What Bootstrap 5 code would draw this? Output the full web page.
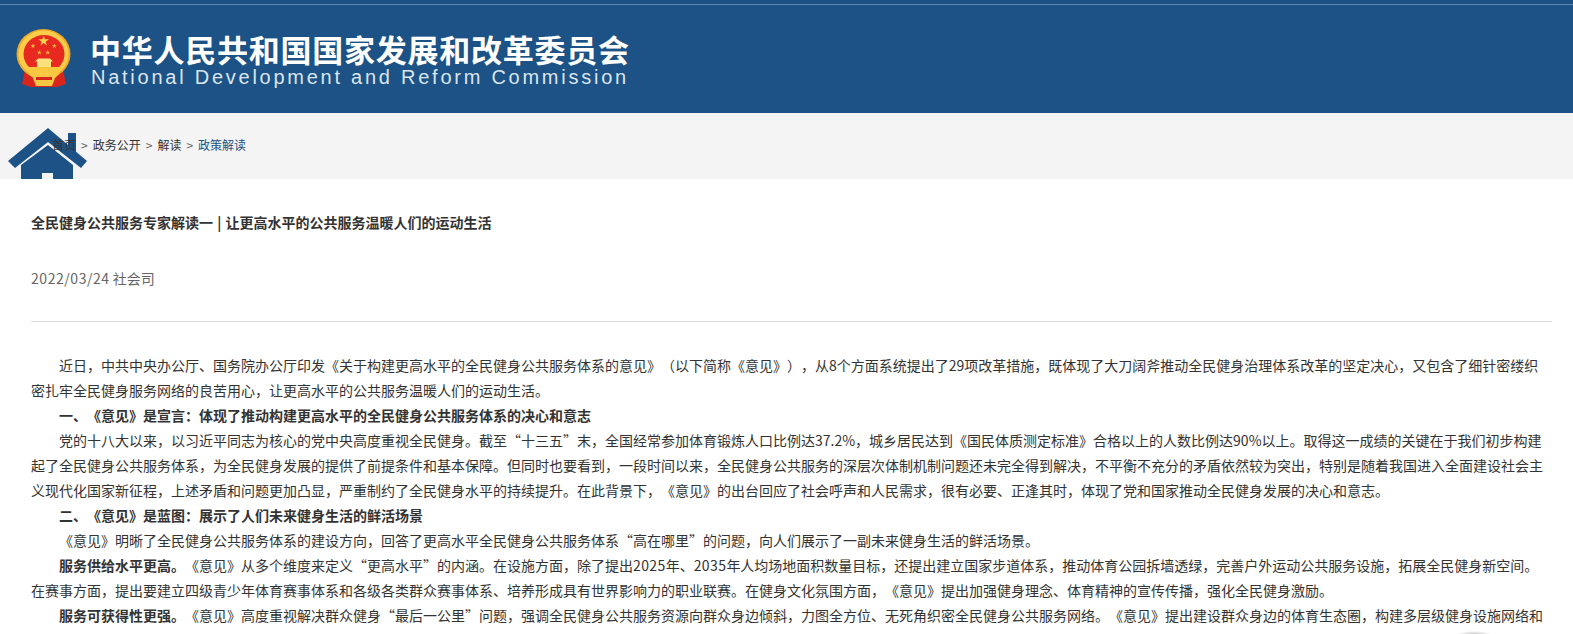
<!DOCTYPE html>
<html lang="zh-CN">
<head>
  <meta charset="UTF-8" />
  <meta name="viewport" content="width=device-width, initial-scale=1" />
  <title>全民健身公共服务专家解读一</title>
  <link href="https://cdn.jsdelivr.net/npm/bootstrap@5.3.2/dist/css/bootstrap.min.css" rel="stylesheet">
  <style>
    body {
      font-family: "Noto Sans CJK SC", "Noto Sans", sans-serif;
      color: #333;
      background: #fff;
      font-size: 14px;
      text-spacing-trim: space-all;
      font-kerning: none;
      overflow: hidden;
    }
    .site-head {
      height: 113px;
      background: #1c5285;
      border-top: 4px solid #1c5285;
      position: relative;
      padding: 24px 0 0 16px;
      gap: 18px;
    }
    .site-head::before {
      content: "";
      position: absolute;
      left: 0;
      right: 0;
      top: 0;
      height: 1px;
      background: #5f86ab;
    }
    .emblem { width: 56px; height: 60px; flex: none; filter: blur(.3px); }
    .name-cn {
      font-size: 31px;
      font-weight: 700;
      line-height: 34px;
      letter-spacing: .75px;
      color: #fff;
      white-space: nowrap;
    }
    .name-en {
      font-family: "Liberation Sans", sans-serif;
      font-size: 20px;
      line-height: 22px;
      letter-spacing: 2.75px;
      padding-left: 1px;
      color: #dbe5ee;
      white-space: nowrap;
    }
    .crumb-band {
      height: 66px;
      background: #f4f4f4;
      position: relative;
      overflow: hidden;
      padding: 23px 0 0 52px;
    }
    .home-pic { position: absolute; left: 8px; top: 15px; width: 80px; height: 51px; filter: blur(.6px); }
    .crumb-band .breadcrumb {
      --bs-breadcrumb-divider: ">";
      --bs-breadcrumb-margin-bottom: 0;
      --bs-breadcrumb-item-padding-x: 5px;
      --bs-breadcrumb-divider-color: #666;
      position: relative;
      font-size: 12px;
      line-height: 18px;
    }
    .crumb-band a { color: #333; text-decoration: none; }
    .crumb-band .active a { color: #1c5285; }
    .article-wrap { padding: 32px 21px 0 31px; }
    .article-title { font-size: 14px; font-weight: 700; line-height: 22px; margin: 0 0 34px; color: #333; word-spacing: 1px; }
    .article-meta { font-size: 14px; line-height: 22px; color: #666; margin: 0; }
    .meta-date { letter-spacing: .55px; }
    .article-rule { margin: 32px 0 31px; border: 0; border-top: 1px solid #ddd; opacity: 1; }
    .article-body { padding-right: 5px; }
    .article-body p { margin: 0; font-size: 14px; line-height: 25px; text-indent: 2em; color: #333; }
    .num-wide { letter-spacing: .4px; }
    .float-shade {
      position: fixed;
      left: 1456px;
      bottom: -5px;
      width: 36px;
      height: 8px;
      border-radius: 50%;
      background: radial-gradient(closest-side, #bbb, rgba(187,187,187,0));
    }
  </style>
</head>
<body>

  <header class="site-head d-flex align-items-start">
    <svg class="emblem" viewBox="0 0 56 60" aria-hidden="true">
      <defs>
        <polygon id="star5" points="0,-1 .225,-.309 .951,-.309 .363,.118 .588,.809 0,.382 -.588,.809 -.363,.118 -.951,-.309 -.225,-.309"/>
      </defs>
      <path d="M9 42 L6 56 L15 59 L41 59 L50 56 L47 42 Z" fill="#d9261c"/>
      <ellipse cx="27.5" cy="26" rx="27" ry="25" fill="#eeaa2a"/>
      <ellipse cx="27.5" cy="26" rx="25" ry="23.5" fill="#fbcd4a"/>
      <ellipse cx="28" cy="26" rx="20.5" ry="19" fill="#e8291f"/>
      <use href="#star5" fill="#fbd84e" transform="translate(27.7 13) scale(5.5)"/>
      <use href="#star5" fill="#f3bd3c" transform="translate(17 18) scale(2.6)"/>
      <use href="#star5" fill="#f3bd3c" transform="translate(38.3 18) scale(2.6)"/>
      <use href="#star5" fill="#f3bd3c" transform="translate(23.3 24.5) scale(2.6)"/>
      <use href="#star5" fill="#f3bd3c" transform="translate(31.7 24.5) scale(2.6)"/>
      <path d="M22 30.5 H34 L37 33.5 H35 V39 H21 V33.5 H19 Z" fill="#fbe07c"/>
      <path d="M10 39 H46 L43 45 H13 Z" fill="#f9c83f"/>
      <path d="M13 46 Q20 41 25 47 L28 45 L31 47 Q36 41 43 46 L39 50 L36 58 H20 L17 50 Z" fill="#f7c743"/>
      <path d="M20 49 H36 V52 H20 Z" fill="#d9261c"/>
    </svg>
    <div class="pt-1">
      <div class="name-cn">中华人民共和国国家发展和改革委员会</div>
      <div class="name-en">National Development and Reform Commission</div>
    </div>
  </header>

  <div class="crumb-band">
    <svg class="home-pic" viewBox="0 0 80 51" aria-hidden="true">
      <path d="M60 5 H68 V26 H60 Z" fill="#1c5285"/>
      <path d="M40 0 L79 33 L73 40 L40 14 L7 40 L0 33 Z" fill="#1c5285"/>
      <path d="M40 17 L65 37 V51 H45 V45 H34 V51 H13 V37 Z" fill="#1c5285"/>
    </svg>
    <nav aria-label="breadcrumb">
      <ol class="breadcrumb">
        <li class="breadcrumb-item"><a href="#">首页</a></li>
        <li class="breadcrumb-item"><a href="#">政务公开</a></li>
        <li class="breadcrumb-item"><a href="#">解读</a></li>
        <li class="breadcrumb-item active" aria-current="page"><a href="#">政策解读</a></li>
      </ol>
    </nav>
  </div>

  <main class="article-wrap">
    <h1 class="article-title">全民健身公共服务专家解读一 | 让更高水平的公共服务温暖人们的运动生活</h1>
    <p class="article-meta"><span class="meta-date">2022/03/24</span> 社会司</p>
    <hr class="article-rule">
    <div class="article-body">
      <p>近日，中共中央办公厅、国务院办公厅印发《关于构建更高水平的全民健身公共服务体系的意见》（以下简称《意见》），从8个方面系统提出了29项改革措施，既体现了大刀阔斧推动全民健身治理体系改革的坚定决心，又包含了细针密缕织密扎牢全民健身服务网络的良苦用心，让更高水平的公共服务温暖人们的运动生活。</p>
      <p class="fw-bold">一、《意见》是宣言：体现了推动构建更高水平的全民健身公共服务体系的决心和意志</p>
      <p>党的十八大以来，以习近平同志为核心的党中央高度重视全民健身。截至“十三五”末，全国经常参加体育锻炼人口比例达37.2%，城乡居民达到《国民体质测定标准》合格以上的人数比例达90%以上。取得这一成绩的关键在于我们初步构建起了全民健身公共服务体系，为全民健身发展的提供了前提条件和基本保障。但同时也要看到，一段时间以来，全民健身公共服务的深层次体制机制问题还未完全得到解决，不平衡不充分的矛盾依然较为突出，特别是随着我国进入全面建设社会主义现代化国家新征程，上述矛盾和问题更加凸显，严重制约了全民健身水平的持续提升。在此背景下，《意见》的出台回应了社会呼声和人民需求，很有必要、正逢其时，体现了党和国家推动全民健身发展的决心和意志。</p>
      <p class="fw-bold">二、《意见》是蓝图：展示了人们未来健身生活的鲜活场景</p>
      <p>《意见》明晰了全民健身公共服务体系的建设方向，回答了更高水平全民健身公共服务体系“高在哪里”的问题，向人们展示了一副未来健身生活的鲜活场景。</p>
      <p><strong>服务供给水平更高。</strong>《意见》从多个维度来定义“更高水平”的内涵。在设施方面，除了提出<span class="num-wide">2025</span>年、<span class="num-wide">2035</span>年人均场地面积数量目标，还提出建立国家步道体系，推动体育公园拆墙透绿，完善户外运动公共服务设施，拓展全民健身新空间。在赛事方面，提出要建立四级青少年体育赛事体系和各级各类群众赛事体系、培养形成具有世界影响力的职业联赛。在健身文化氛围方面，《意见》提出加强健身理念、体育精神的宣传传播，强化全民健身激励。</p>
      <p><strong>服务可获得性更强。</strong>《意见》高度重视解决群众健身“最后一公里”问题，强调全民健身公共服务资源向群众身边倾斜，力图全方位、无死角织密全民健身公共服务网络。《意见》提出建设群众身边的体育生态圈，构建多层级健身设施网络和</p>
    </div>
  </main>

  <div class="float-shade"></div>

  <script src="https://cdn.jsdelivr.net/npm/bootstrap@5.3.2/dist/js/bootstrap.bundle.min.js"></script>
</body>
</html>
